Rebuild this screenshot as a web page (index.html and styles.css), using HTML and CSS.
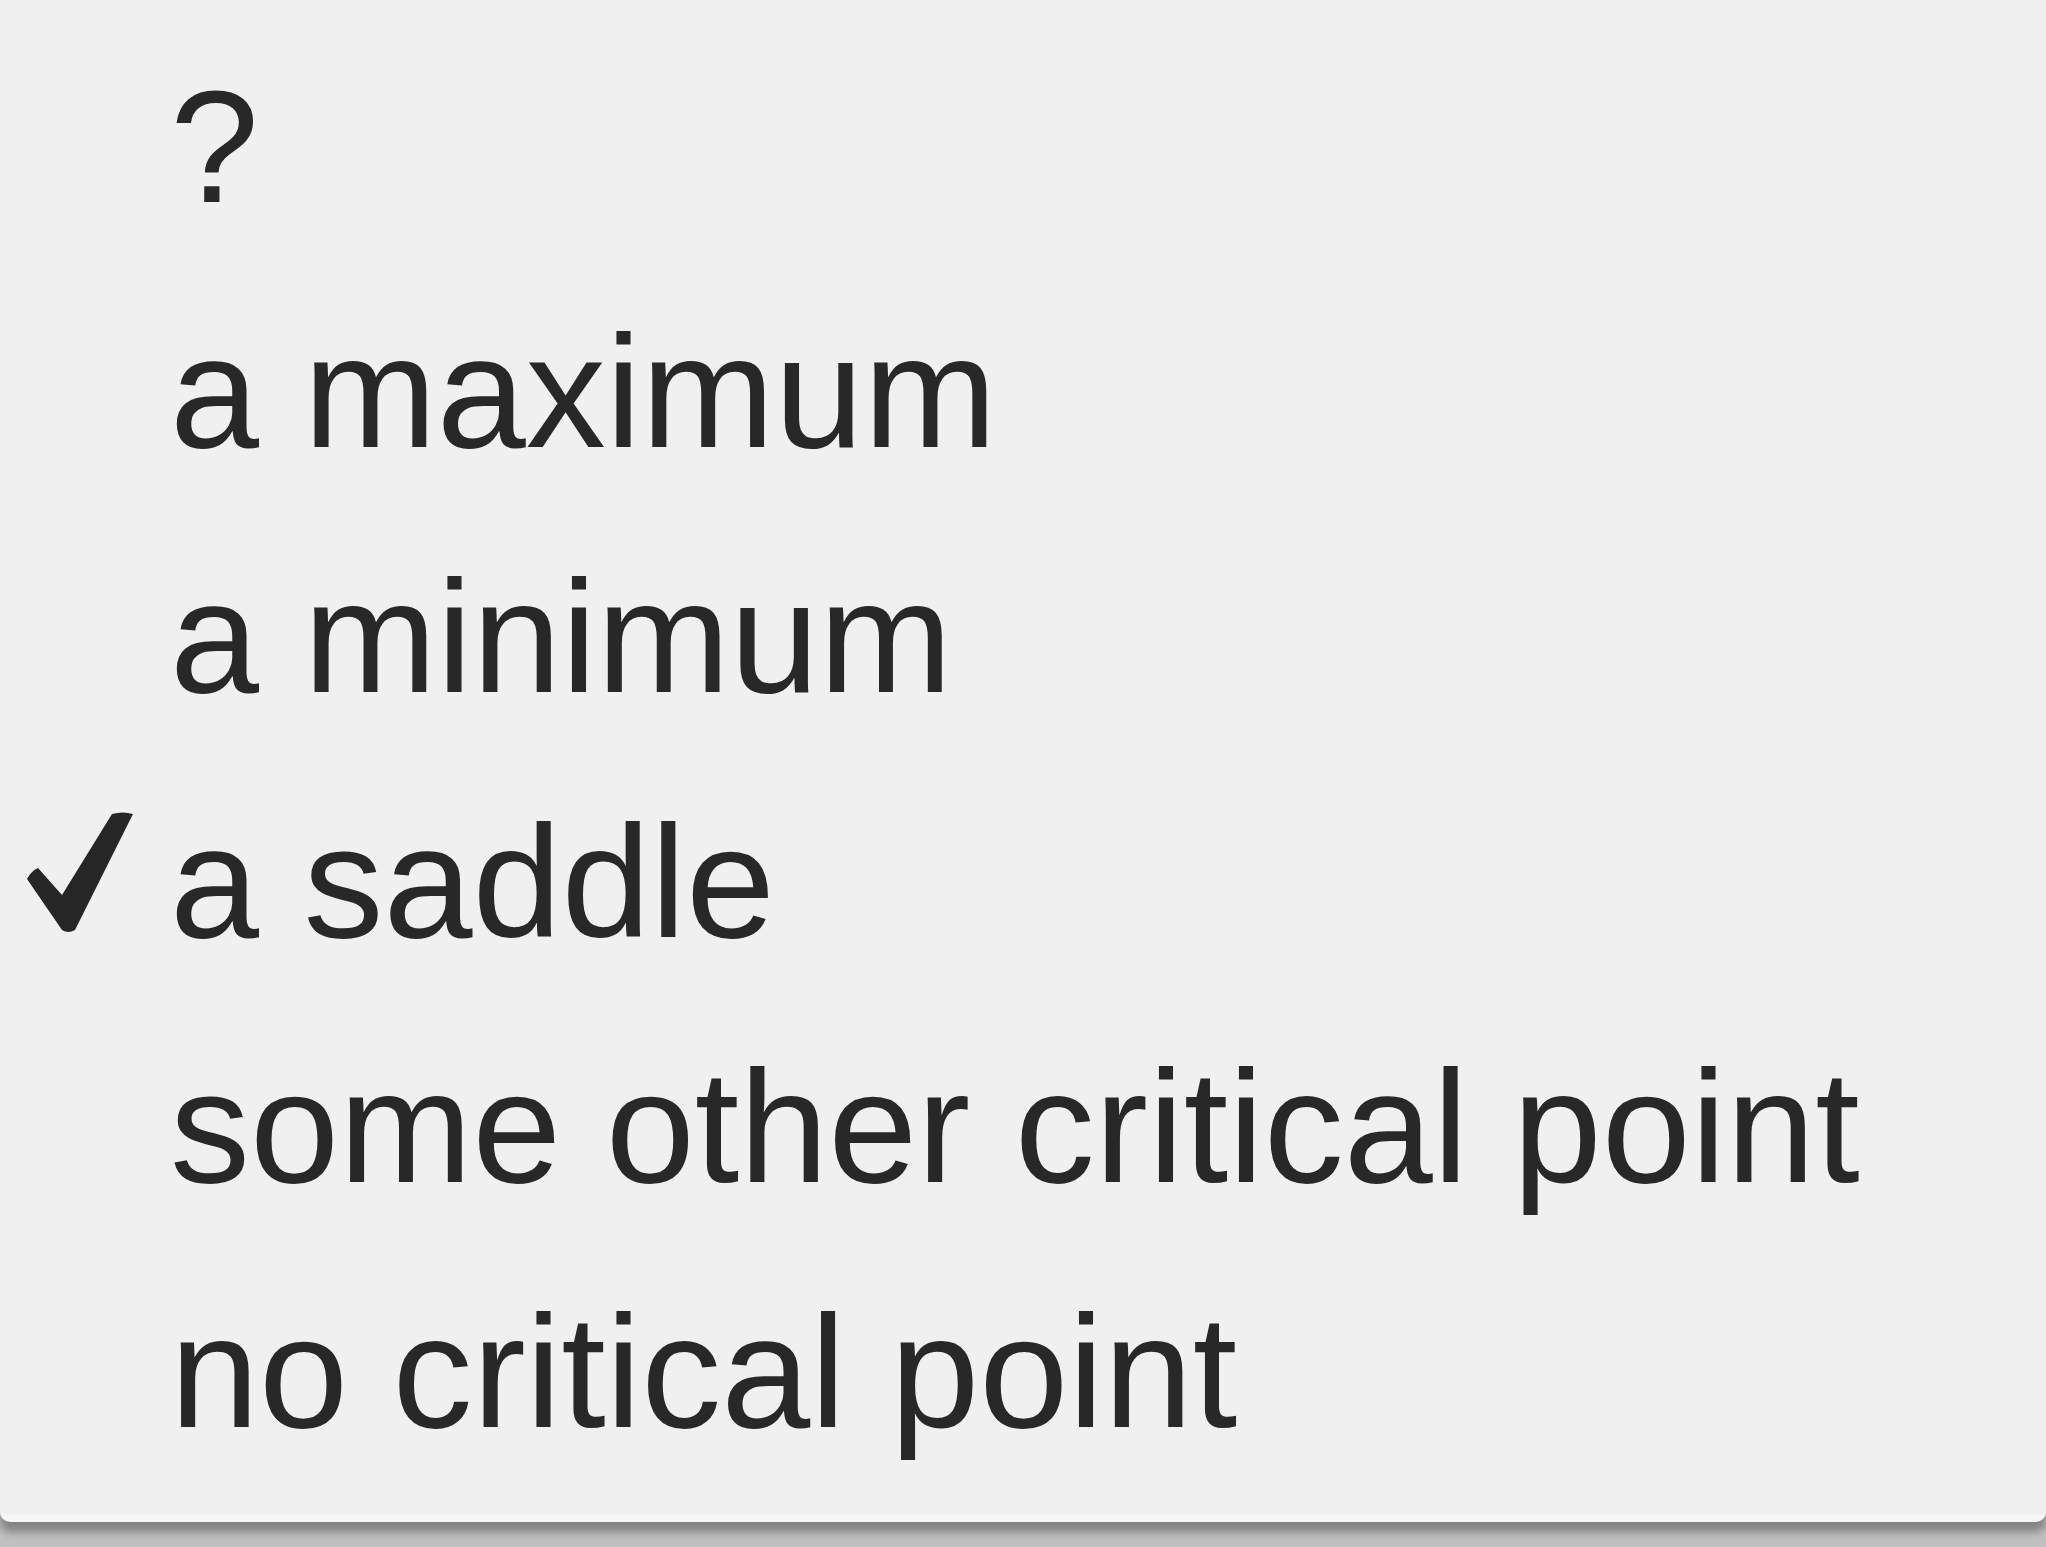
FILE: index.html
```html
<!DOCTYPE html>
<html lang="en">
<head>
    <meta charset="UTF-8">
    <title>Critical point</title>
    <link rel="stylesheet" href="styles.css">
</head>
<body>
    <div class="menu">
        <div class="item">?</div>
        <div class="item">a maximum</div>
        <div class="item">a minimum</div>
        <div class="item checked">
            <svg class="check" viewBox="0 0 112 126" width="112" height="126">
                <path d="M3 70 Q7 62 14 59 L38 86 L88 5 Q99 2 109 5 L51 121 Q44 125 38 121 Z" fill="#262626"/>
            </svg>
            a saddle
        </div>
        <div class="item">some other critical point</div>
        <div class="item">no critical point</div>
    </div>
</body>
</html>
```
FILE: styles.css
```css
html, body {
    height: 100%;
}
body {
    margin: 0;
    background-color: #c0c0c0;
    font-family: "Liberation Sans", Arial, sans-serif;
    overflow: hidden;
}

.menu {
    height: 1522px;
    padding-top: 24px;
    box-sizing: border-box;
    background-color: #f0f0f0;
    border-bottom: 7px solid #f5f5f5;
    border-bottom-left-radius: 10px;
    border-bottom-right-radius: 10px;
    box-shadow: 0 10px 8px rgba(0, 0, 0, 0.32);
}

.item {
    position: relative;
    padding-left: 170px;
    font-size: 160px;
    line-height: 245px;
    color: #282828;
    white-space: nowrap;
}

/* check mark of the selected row */
.check {
    position: absolute;
    left: 24px;
    top: 50px;
}
```
